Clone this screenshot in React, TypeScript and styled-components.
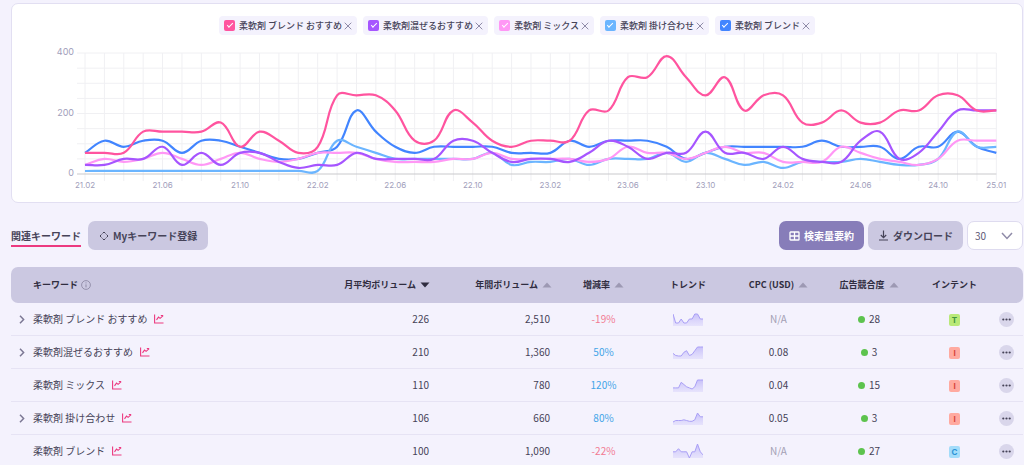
import React from "react";
import styled, { createGlobalStyle } from "styled-components";

const Global = createGlobalStyle`
  *, *::before, *::after { box-sizing: border-box; }
  body {
    margin: 0;
    background: #f4f2fd;
    color: #464358;
    font-family: "Noto Sans CJK JP", "Noto Sans", sans-serif;
    font-size: 10px;
    line-height: 16px;
    overflow-x: hidden;
  }
  button, input, select { font: inherit; color: inherit; margin: 0; }
`;

type Series = { label: string; color: string; data: number[] };

const SERIES: Series[] = [
  {
    label: "柔軟剤 ブレンド おすすめ",
    color: "#ff549f",
    data: [70, 70, 70, 140, 140, 140, 140, 170, 90, 140, 110, 70, 90, 260, 260, 260, 210, 110, 110, 210, 170, 110, 90, 110, 110, 110, 210, 210, 320, 320, 390, 320, 260, 320, 210, 260, 260, 170, 170, 210, 170, 170, 210, 210, 260, 260, 210, 210],
  },
  {
    label: "柔軟剤混ぜるおすすめ",
    color: "#a655ff",
    data: [30, 30, 50, 50, 90, 30, 70, 30, 70, 70, 40, 20, 30, 30, 70, 50, 50, 50, 50, 110, 110, 70, 40, 50, 50, 40, 70, 110, 90, 50, 70, 70, 140, 70, 70, 50, 90, 50, 40, 40, 110, 140, 50, 70, 140, 210, 210, 210],
  },
  {
    label: "柔軟剤 ミックス",
    color: "#ff97f5",
    data: [30, 50, 40, 50, 70, 50, 30, 50, 70, 50, 40, 50, 70, 70, 70, 50, 40, 40, 40, 50, 50, 70, 50, 50, 50, 50, 40, 50, 90, 70, 70, 50, 70, 90, 70, 70, 40, 40, 40, 90, 70, 50, 40, 30, 50, 110, 110, 110],
  },
  {
    label: "柔軟剤 掛け合わせ",
    color: "#6bb5ff",
    data: [10, 10, 10, 10, 10, 10, 10, 10, 10, 10, 10, 10, 10, 110, 90, 70, 50, 50, 50, 50, 50, 70, 30, 40, 40, 50, 30, 50, 50, 50, 70, 40, 70, 50, 30, 40, 20, 40, 40, 40, 50, 40, 30, 30, 50, 140, 90, 90],
  },
  {
    label: "柔軟剤 ブレンド",
    color: "#4285ff",
    data: [70, 110, 90, 110, 110, 70, 110, 110, 90, 70, 50, 50, 70, 90, 210, 140, 90, 70, 90, 90, 90, 90, 70, 70, 70, 110, 90, 110, 110, 110, 90, 50, 70, 90, 90, 90, 90, 90, 110, 90, 90, 90, 50, 90, 90, 140, 90, 70],
  },
];

const X_LABELS = ["21.02", "21.06", "21.10", "22.02", "22.06", "22.10", "23.02", "23.06", "23.10", "24.02", "24.06", "24.10"];

/* ---------- page ---------- */

const Page = styled.main`
  padding: 3px 1px 0 11px;
`;

const ChartCard = styled.section`
  background: #fff;
  border: 1px solid #e2dff2;
  border-radius: 7px;
  padding: 12px 0 2px;
`;

const Legend = styled.div`
  display: flex;
  justify-content: center;
  gap: 6px;
  margin-bottom: 5px;
`;

const Chip = styled.div`
  display: flex;
  align-items: center;
  height: 19px;
  padding: 0 5px;
  border-radius: 4px;
  background: #f4f2fd;
  font-size: 9px;
  font-weight: 500;
`;

const ChipLabel = styled.label`
  display: flex;
  align-items: center;
  gap: 4px;
`;

const ChipCheck = styled.input<{ $color: string }>`
  appearance: none;
  width: 11px;
  height: 11px;
  border-radius: 2px;
  background: ${(p) => p.$color};
  display: grid;
  place-items: center;
  &::after {
    content: "";
    width: 6px;
    height: 3px;
    border: solid #fff;
    border-width: 0 0 1px 1px;
    transform: rotate(-45deg);
    margin-bottom: 2px;
  }
  &:not(:checked)::after { display: none; }
`;

const IconButton = styled.button`
  display: inline-flex;
  align-items: center;
  justify-content: center;
  border: 0;
  padding: 0;
  background: none;
  cursor: pointer;
`;

const ChipClose = styled(IconButton)`
  margin-left: 2px;
  color: #8f8ba8;
`;

const ChartSvg = styled.svg`
  display: block;
  width: 100%;
  height: auto;
  font-family: Inter, sans-serif;
  fill: #a19ebb;
`;

/* ---------- toolbar ---------- */

const Toolbar = styled.div`
  display: flex;
  align-items: center;
  justify-content: space-between;
  margin: 18px 0 17px;
`;

const Group = styled.div<{ $gap: number }>`
  display: flex;
  align-items: center;
  gap: ${(p) => p.$gap}px;
`;

const ActiveTab = styled.button`
  border: 0;
  border-bottom: 2px solid #ec3a80;
  background: none;
  padding: 4px 0 1px;
  font-weight: 700;
`;

const ToolButton = styled.button<{ $primary?: boolean; $pad?: number }>`
  display: flex;
  align-items: center;
  gap: 4px;
  height: 29px;
  padding: 0 ${(p) => p.$pad ?? 10}px;
  border: 0;
  border-radius: 7px;
  font-weight: 700;
  white-space: nowrap;
  color: ${(p) => (p.$primary ? "#fff" : "#464358")};
  background: ${(p) => (p.$primary ? "#877db9" : "#cbc8e1")};
`;

const SelectBox = styled.div`
  display: grid;
  align-items: center;
  width: 56px;
  height: 29px;
  border: 1px solid #dedbef;
  border-radius: 7px;
  background: #fff;
  color: #5d5975;
  > * { grid-area: 1 / 1; }
  > svg { justify-self: end; margin-right: 9px; pointer-events: none; }
`;

const Select = styled.select`
  appearance: none;
  width: 100%;
  height: 27px;
  border: 0;
  padding: 0 7px;
  background: none;
`;

/* ---------- table ---------- */

const Table = styled.table`
  width: 100%;
  table-layout: fixed;
  border-collapse: separate;
  border-spacing: 0;
`;

type Align = "left" | "right" | "center";

const Th = styled.th<{ $align?: Align; $inset?: number }>`
  height: 36px;
  padding: 0 ${(p) => p.$inset ?? 0}px 0 0;
  background: #cbc8e1;
  color: #302d40;
  font-size: 9px;
  font-weight: 700;
  text-align: ${(p) => p.$align ?? "center"};
  white-space: nowrap;
  &:first-child { border-radius: 7px 0 0 7px; padding-left: 22px; }
  &:last-child { border-radius: 0 7px 7px 0; }
`;

const HeadLabel = styled.span`
  display: inline-flex;
  align-items: center;
  gap: 3px;
`;

const SortButton = styled(IconButton)`
  gap: 4px;
  font-weight: 700;
`;

const Td = styled.td<{ $align?: Align; $inset?: number }>`
  padding: 0 ${(p) => p.$inset ?? 0}px 0 0;
  height: 33px;
  border-bottom: 1px solid #e6e3f4;
  text-align: ${(p) => p.$align ?? "center"};
  white-space: nowrap;
`;

const KeywordCell = styled.div`
  display: grid;
  grid-template-columns: 22px auto;
  align-items: center;
  justify-content: start;
`;

const Expand = styled(IconButton)`
  color: #7c7894;
`;

const Keyword = styled.span`
  grid-column: 2;
  display: flex;
  align-items: center;
  gap: 7px;
`;

const Rate = styled.span<{ $up: boolean }>`
  color: ${(p) => (p.$up ? "#42a5e8" : "#f27a92")};
`;

const Muted = styled.span`
  color: #a3a0b4;
`;

const Competition = styled.span`
  display: inline-flex;
  align-items: center;
  gap: 4px;
  &::before {
    content: "";
    width: 7px;
    height: 7px;
    border-radius: 50%;
    background: #5dc34e;
  }
`;

const INTENT: Record<string, [string, string]> = {
  T: ["#b9e978", "#3f9440"],
  I: ["#ffaaa0", "#d6453a"],
  C: ["#a3dcfa", "#2c93d6"],
};

const Intent = styled.span<{ $kind: string }>`
  display: inline-flex;
  align-items: center;
  justify-content: center;
  width: 11px;
  height: 12px;
  border-radius: 2px;
  vertical-align: middle;
  font: 700 8px/12px Inter, sans-serif;
  background: ${(p) => INTENT[p.$kind][0]};
  color: ${(p) => INTENT[p.$kind][1]};
`;

const More = styled(IconButton)`
  width: 15px;
  height: 15px;
  border-radius: 50%;
  background: #d9d6eb;
  vertical-align: middle;
`;

const Spark = styled.svg`
  display: block;
  margin: 0 auto;
`;

/* ---------- chart ---------- */

const LEFT = 73;
const STEP = 19.39;
const BASE = 134;
const SCALE = 0.3025;
const px = (i: number) => LEFT + i * STEP;
const py = (v: number) => BASE - v * SCALE;

function smoothPath(data: number[]) {
  const tension = 0.4;
  const pts = data.map((v, i) => [px(i), py(v)]);
  const ctrl = pts.map((p, i) => {
    const a = pts[Math.max(i - 1, 0)];
    const b = pts[Math.min(i + 1, pts.length - 1)];
    const d0 = Math.hypot(p[0] - a[0], p[1] - a[1]);
    const d1 = Math.hypot(b[0] - p[0], b[1] - p[1]);
    const fa = (tension * d0) / (d0 + d1);
    const fb = (tension * d1) / (d0 + d1);
    return [p[0] - fa * (b[0] - a[0]), p[1] - fa * (b[1] - a[1]), p[0] + fb * (b[0] - a[0]), p[1] + fb * (b[1] - a[1])];
  });
  return pts
    .map((p, i) =>
      i === 0
        ? `M${p[0]} ${p[1]}`
        : `C${ctrl[i - 1][2].toFixed(2)} ${ctrl[i - 1][3].toFixed(2)} ${ctrl[i][0].toFixed(2)} ${ctrl[i][1].toFixed(2)} ${p[0].toFixed(2)} ${p[1].toFixed(2)}`
    )
    .join("");
}

function TrendChart() {
  const last = px(47);
  return (
    <ChartSvg viewBox="0 0 1010 160" role="img" aria-label="検索ボリュームの推移">
      <g stroke="#f0f0f3" strokeWidth="1">
        {Array.from({ length: 48 }, (_, i) => (
          <line key={i} x1={px(i)} x2={px(i)} y1={py(400)} y2={BASE + 7} />
        ))}
        {Array.from({ length: 8 }, (_, i) => (
          <line key={i} x1={LEFT - 8} x2={last} y1={py((i + 1) * 50)} y2={py((i + 1) * 50)} />
        ))}
      </g>
      <line x1={LEFT - 8} x2={last} y1={BASE} y2={BASE} stroke="#c9c9cc" />
      <g fontSize="9" textAnchor="end">
        {[0, 200, 400].map((v) => (
          <text key={v} x={LEFT - 11} y={py(v) + 2}>{v}</text>
        ))}
      </g>
      <g fontSize="8" textAnchor="middle">
        {X_LABELS.map((t, i) => (
          <text key={t} x={px(i * 4)} y={BASE + 14}>{t}</text>
        ))}
        <text x={last} y={BASE + 14}>25.01</text>
      </g>
      <g fill="none" strokeWidth="2.2">
        {[...SERIES].reverse().map((s) => (
          <path key={s.label} d={smoothPath(s.data)} stroke={s.color} />
        ))}
      </g>
    </ChartSvg>
  );
}

function Sparkline({ data, tall }: { data: number[]; tall?: boolean }) {
  const min = Math.min(...data);
  const max = Math.max(...data);
  const bottom = tall ? 15 : 12;
  const top = tall ? 1 : 3;
  const line = data
    .map((v, i) => `${((i * 30) / (data.length - 1)).toFixed(1)},${(bottom - ((v - min) / (max - min)) * (bottom - top)).toFixed(1)}`)
    .join(" ");
  return (
    <Spark width="30" height="16" viewBox="0 0 30 16" aria-hidden="true">
      <defs>
        <linearGradient id="spark" x1="0" y1="0" x2="0" y2="1">
          <stop offset="0" stopColor="#b5abf8" stopOpacity="0.7" />
          <stop offset="1" stopColor="#d9d4fb" stopOpacity="0.5" />
        </linearGradient>
      </defs>
      <polygon points={`0,15 ${line} 30,15`} fill="url(#spark)" />
      <polyline points={line} fill="none" stroke="#a99ff6" strokeWidth="1" />
    </Spark>
  );
}

/* ---------- icons ---------- */

const CloseIcon = () => (
  <svg width="8" height="8" viewBox="0 0 8 8" fill="none" stroke="currentColor">
    <path d="M.7 .7l6.6 6.6M7.3 .7L.7 7.3" />
  </svg>
);

const ChartIcon = () => (
  <svg width="10" height="10" viewBox="0 0 10 10" fill="none" stroke="#ec3a80" strokeWidth="1.1">
    <path d="M.6 .5v8.5h8.9M2.5 5.8l2-2.7 1.6 1.3L9.2 1.6M6.8 1.5h2.4" />
  </svg>
);

const ChevronRight = () => (
  <svg width="6" height="9" viewBox="0 0 6 9" fill="none" stroke="currentColor" strokeWidth="1.5">
    <path d="M1 .8l3.6 3.7L1 8.2" />
  </svg>
);

const SortIcon = ({ down }: { down?: boolean }) => (
  <svg width="10" height="6" viewBox="0 0 10 6">
    {down ? <path d="M.5 .5h9L5 5.5z" fill="#302d40" /> : <path d="M.5 5.5h9L5 .5z" fill="#9d99b3" />}
  </svg>
);

const InfoIcon = () => (
  <svg width="10" height="10" viewBox="0 0 10 10" fill="none" stroke="#8f8ba6">
    <circle cx="5" cy="5" r="4.4" strokeWidth=".9" />
    <path d="M5 4.4v3M5 2.4v1" />
  </svg>
);

const DotsIcon = () => (
  <svg width="9" height="3" viewBox="0 0 9 3" fill="#464358">
    <circle cx="1.3" cy="1.5" r="1.1" />
    <circle cx="4.5" cy="1.5" r="1.1" />
    <circle cx="7.7" cy="1.5" r="1.1" />
  </svg>
);

/* ---------- data ---------- */

type Row = { volume: string; yearly: string; rate: string; cpc: string; comp: number; intent: string; expand: boolean };

const ROWS: Row[] = [
  { volume: "226", yearly: "2,510", rate: "-19%", cpc: "N/A", comp: 28, intent: "T", expand: true },
  { volume: "210", yearly: "1,360", rate: "50%", cpc: "0.08", comp: 3, intent: "I", expand: true },
  { volume: "110", yearly: "780", rate: "120%", cpc: "0.04", comp: 15, intent: "I", expand: false },
  { volume: "106", yearly: "660", rate: "80%", cpc: "0.05", comp: 3, intent: "I", expand: true },
  { volume: "100", yearly: "1,090", rate: "-22%", cpc: "N/A", comp: 27, intent: "C", expand: false },
];

type Column = { label: string; width?: number; align?: Align; inset?: number; sort?: "down" | "up"; info?: boolean };

const COLUMNS: Column[] = [
  { label: "キーワード", align: "left", info: true },
  { label: "月平均ボリューム", width: 130, align: "right", sort: "down" },
  { label: "年間ボリューム", width: 140, align: "right", inset: 18, sort: "up" },
  { label: "増減率", width: 67, sort: "up" },
  { label: "トレンド", width: 102 },
  { label: "CPC (USD)", width: 79, sort: "up" },
  { label: "広告競合度", width: 102, sort: "up" },
  { label: "インテント", width: 69 },
  { label: "", width: 34 },
];

export default function App() {
  return (
    <>
      <Global />
      <Page>
        <ChartCard>
          <Legend>
            {SERIES.map((s) => (
              <Chip key={s.label}>
                <ChipLabel>
                  <ChipCheck type="checkbox" defaultChecked $color={s.color} />
                  {s.label}
                </ChipLabel>
                <ChipClose aria-label={`${s.label}を削除`}><CloseIcon /></ChipClose>
              </Chip>
            ))}
          </Legend>
          <TrendChart />
        </ChartCard>

        <Toolbar>
          <Group $gap={7}>
            <ActiveTab>関連キーワード</ActiveTab>
            <ToolButton $pad={11}>
              <svg width="10" height="10" viewBox="0 0 10 10" fill="none" stroke="currentColor">
                <path d="M3.7 2.3L5 1l1.3 1.3M7.7 3.7L9 5 7.7 6.3M6.3 7.7L5 9 3.7 7.7M2.3 6.3L1 5l1.3-1.3" />
                <path d="M3.7 2.3L2.3 3.7M6.3 2.3l1.4 1.4M7.7 6.3L6.3 7.7M2.3 6.3l1.4 1.4" strokeOpacity=".45" />
              </svg>
              Myキーワード登録
            </ToolButton>
          </Group>
          <Group $gap={4}>
            <ToolButton $primary>
              <svg width="11" height="10" viewBox="0 0 11 10" fill="none" stroke="currentColor" strokeWidth="1.3">
                <rect x="1" y="1" width="9" height="8" rx=".6" />
                <path d="M1 5h9M5.5 1v8" />
              </svg>
              検索量要約
            </ToolButton>
            <ToolButton>
              <svg width="11" height="11" viewBox="0 0 11 11" fill="none" stroke="currentColor" strokeWidth="1.2">
                <path d="M5.5 .5v7M2.8 5l2.7 2.6L8.2 5M1 10h9" />
              </svg>
              ダウンロード
            </ToolButton>
            <SelectBox>
              <Select aria-label="表示件数" defaultValue="30">
                <option>30</option>
                <option>50</option>
                <option>100</option>
              </Select>
              <svg width="12" height="8" viewBox="0 0 12 8" fill="none" stroke="#8f8ba8" strokeWidth="1.5">
                <path d="M1 1l5 5.5L11 1" />
              </svg>
            </SelectBox>
          </Group>
        </Toolbar>

        <Table>
          <colgroup>
            {COLUMNS.map((c, i) => <col key={i} width={c.width} />)}
          </colgroup>
          <thead>
            <tr>
              {COLUMNS.map((c, i) => (
                <Th key={i} scope="col" $align={c.align} $inset={c.inset}>
                  {c.sort ? (
                    <SortButton>
                      {c.label}
                      <SortIcon down={c.sort === "down"} />
                    </SortButton>
                  ) : (
                    <HeadLabel>
                      {c.label}
                      {c.info && <InfoIcon />}
                    </HeadLabel>
                  )}
                </Th>
              ))}
            </tr>
          </thead>
          <tbody>
            {ROWS.map((r, i) => (
              <tr key={i}>
                <Td $align="left">
                  <KeywordCell>
                    {r.expand && <Expand aria-label="展開"><ChevronRight /></Expand>}
                    <Keyword>
                      {SERIES[i].label}
                      <IconButton aria-label="グラフ"><ChartIcon /></IconButton>
                    </Keyword>
                  </KeywordCell>
                </Td>
                <Td $align="right" $inset={1}>{r.volume}</Td>
                <Td $align="right" $inset={20}>{r.yearly}</Td>
                <Td><Rate $up={!r.rate.startsWith("-")}>{r.rate}</Rate></Td>
                <Td><Sparkline data={SERIES[i].data.slice(-12)} tall={i === 4} /></Td>
                <Td>{r.cpc === "N/A" ? <Muted>{r.cpc}</Muted> : r.cpc}</Td>
                <Td><Competition>{r.comp}</Competition></Td>
                <Td><Intent $kind={r.intent}>{r.intent}</Intent></Td>
                <Td><More aria-label="その他"><DotsIcon /></More></Td>
              </tr>
            ))}
          </tbody>
        </Table>
      </Page>
    </>
  );
}
